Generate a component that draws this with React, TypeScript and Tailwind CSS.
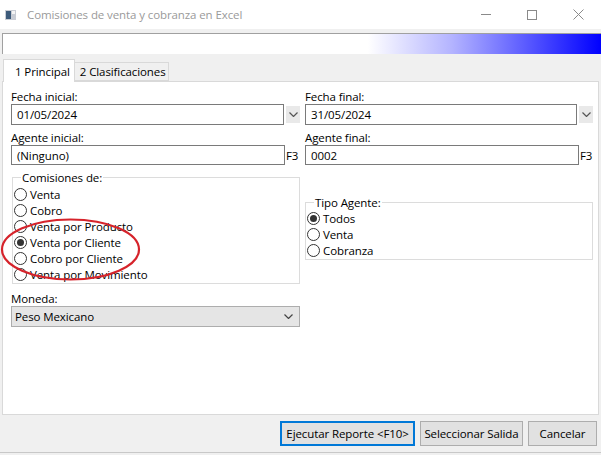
import { useState } from "react";

const Radio = ({ checked }: { checked?: boolean }) => (
  <span className="flex h-[13px] w-[13px] shrink-0 items-center justify-center rounded-full border border-[#333333] bg-white">
    {checked && <span className="h-[7px] w-[7px] rounded-full bg-[#333333]" />}
  </span>
);

const Option = ({ label, checked, onClick }: { label: string; checked?: boolean; onClick?: () => void }) => (
  <div className="flex h-[16px] cursor-default items-center gap-[3px]" onClick={onClick}>
    <Radio checked={checked} />
    <span>{label}</span>
  </div>
);

const Chevron = ({ color = "#555555" }: { color?: string }) => (
  <svg width="9" height="5" viewBox="0 0 9 5">
    <path d="M0.5 0.5 L4.5 4.5 L8.5 0.5" fill="none" stroke={color} strokeWidth="1.2" />
  </svg>
);

const DateField = ({ value, width }: { value: string; width: string }) => (
  <div className="flex items-center gap-[2px]">
    <div className={`flex h-[21px] items-center border border-[#7a7a7a] bg-white pl-[5px] ${width}`}>{value}</div>
    <div className="flex h-[17px] w-[14px] items-center justify-center bg-[#e9e9e9]">
      <Chevron />
    </div>
  </div>
);

const LookupField = ({ value, width }: { value: string; width: string }) => (
  <div className="flex items-center">
    <div className={`flex h-[20px] items-center border border-[#7a7a7a] bg-white pl-[5px] ${width}`}>{value}</div>
    <span className="pl-[1px]">F3</span>
  </div>
);

const comisiones = [
  "Venta",
  "Cobro",
  "Venta por Producto",
  "Venta por Cliente",
  "Cobro por Cliente",
  "Venta por Movimiento",
];

const tipos = ["Todos", "Venta", "Cobranza"];

export default function App() {
  const [comision, setComision] = useState(3);
  const [tipo, setTipo] = useState(0);

  return (
    <div
      className="relative flex h-[455px] w-[601px] flex-col overflow-hidden bg-[#f0f0f0] text-[11.5px] leading-[15px] tracking-[-0.1px] text-black"
      style={{ fontFamily: '"Segoe UI", "Open Sans", "Noto Sans", sans-serif' }}
    >
      {/* title bar */}
      <div className="flex h-[29px] shrink-0 items-center bg-white">
        <svg className="ml-[5px]" width="11" height="10" viewBox="0 0 11 10">
          <rect x="0" y="0" width="11" height="10" fill="#c8ccd4" />
          <rect x="1" y="1" width="5" height="8" fill="#3c5a7a" />
          <rect x="7" y="1" width="3" height="3" fill="#f4f4f4" />
        </svg>
        <span className="ml-[11px] text-[#9a9a9a]">Comisiones de venta y cobranza en Excel</span>
        <div className="ml-auto flex h-full items-center">
          <div className="flex h-full w-[46px] items-center justify-center">
            <span className="h-px w-[10px] bg-[#8a8a8a]" />
          </div>
          <div className="flex h-full w-[46px] items-center justify-center">
            <span className="h-[10px] w-[10px] border border-[#8a8a8a]" />
          </div>
          <div className="flex h-full w-[46px] items-center justify-center">
            <svg width="11" height="11" viewBox="0 0 11 11">
              <path d="M0.5 0.5 L10.5 10.5 M10.5 0.5 L0.5 10.5" stroke="#8a8a8a" strokeWidth="1" />
            </svg>
          </div>
        </div>
      </div>

      {/* progress */}
      <div className="mt-[4px] ml-[2px] h-[21px] shrink-0 border-t border-l border-[#a0a0a0] bg-[linear-gradient(to_right,#ffffff_0%,#ffffff_61%,#b4b4ff_75%,#0000ff_100%)]" />

      {/* tabs */}
      <div className="mt-[5px] flex h-[22px] shrink-0 items-end pl-[3px]">
        <div className="relative z-10 -mb-px flex h-[23px] items-center border border-b-0 border-[#d9d9d9] bg-white pl-[11px] pr-[4px] pt-[1px]">
          1 Principal
        </div>
        <div className="flex h-[19px] items-center border border-l-0 border-[#d9d9d9] bg-[#f0f0f0] pl-[5px] pr-[2px]">
          2 Clasificaciones
        </div>
      </div>

      {/* tab page */}
      <div className="mx-[2px] flex h-[334px] shrink-0 gap-[5px] border border-[#d9d9d9] bg-white pl-[8px] pt-[7px]">
        <div className="flex w-[289px] flex-col">
          <span>Fecha inicial:</span>
          <DateField value="01/05/2024" width="w-[275px]" />
          <span className="mt-[5px]">Agente inicial:</span>
          <LookupField value="(Ninguno)" width="w-[274px]" />

          <fieldset className="mt-[5px] ml-[1px] w-[288px] border border-[#dcdcdc] pl-[1px] pt-[1px] pb-[1px]">
            <legend className="ml-[7px] px-[1px]">Comisiones de:</legend>
            {comisiones.map((c, i) => (
              <Option key={c} label={c} checked={comision === i} onClick={() => setComision(i)} />
            ))}
          </fieldset>

          <span className="mt-[7px]">Moneda:</span>
          <div className="flex h-[21px] items-center justify-between border border-[#adadad] bg-[#e5e5e5] pl-[3px] pr-[6px]">
            <span>Peso Mexicano</span>
            <Chevron color="#444444" />
          </div>
        </div>

        <div className="flex w-[288px] flex-col">
          <span>Fecha final:</span>
          <DateField value="31/05/2024" width="w-[272px]" />
          <span className="mt-[5px]">Agente final:</span>
          <LookupField value="0002" width="w-[274px]" />

          <fieldset className="mt-[30px] w-[288px] border border-[#dcdcdc] pl-[1px] pb-[1px]">
            <legend className="ml-[7px] px-[1px]">Tipo Agente:</legend>
            {tipos.map((t, i) => (
              <Option key={t} label={t} checked={tipo === i} onClick={() => setTipo(i)} />
            ))}
          </fieldset>
        </div>
      </div>

      {/* buttons */}
      <div className="mt-[6px] flex justify-end gap-[5px] pr-[4px]">
        <button className="h-[25px] w-[135px] border-2 border-[#0078d7] bg-[#e1e1e1]">Ejecutar Reporte &lt;F10&gt;</button>
        <button className="h-[25px] w-[103px] border border-[#adadad] bg-[#e1e1e1]">Seleccionar Salida</button>
        <button className="h-[25px] w-[69px] border border-[#adadad] bg-[#e1e1e1]">Cancelar</button>
      </div>
      <div className="mt-auto mb-[2px] h-px bg-[#c8c8c8]" />

      {/* annotation */}
      <svg className="pointer-events-none absolute left-0 top-[217px]" width="142" height="66" viewBox="0 0 142 66">
        <ellipse cx="70.5" cy="32.5" rx="68.5" ry="30" fill="none" stroke="#d6232b" strokeWidth="2.2" />
      </svg>
    </div>
  );
}
